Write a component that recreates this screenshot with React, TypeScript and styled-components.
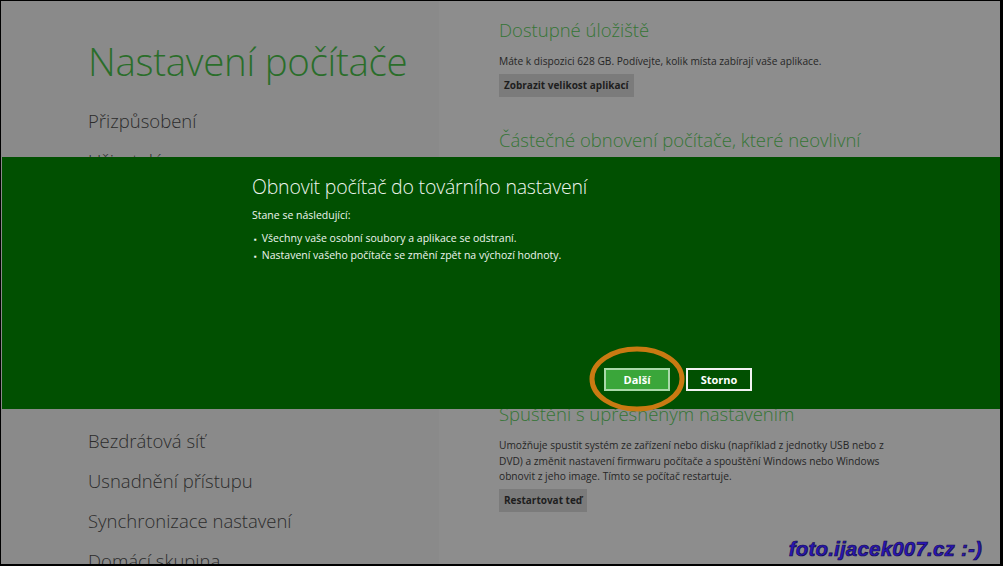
import React from 'react'
import styled, { createGlobalStyle } from 'styled-components'

const Global = createGlobalStyle`
  html, body {
    margin: 0;
    padding: 0;
    background: #000;
  }
  * { box-sizing: border-box; }
`

const Frame = styled.div`
  position: relative;
  width: 1003px;
  height: 566px;
  overflow: hidden;
  border-top: 1px solid #000;
  border-left: 1px solid #000;
  border-right: 3px solid #000;
  border-bottom: 2px solid #000;
  box-shadow: inset 1px 1px 0 #e8e8e8;
  background: #8b8b8b;
  font-family: "Open Sans", "Noto Sans", sans-serif;
`

const Page = styled.div`
  display: grid;
  grid-template-columns: 438px 1fr;
  height: 100%;
`

const Side = styled.div`
  padding: 34px 0 0 87px;
  background: #8a8a8a;
`

const Title = styled.h1`
  margin: 0 0 14px;
  font-size: 38.5px;
  font-weight: 300;
  line-height: 52px;
  color: #2a6e2a;
  letter-spacing: -0.3px;
`

const NavList = styled.ul`
  list-style: none;
  margin: 0;
  padding: 0;
`

const NavItem = styled.li`
  height: 40px;
  line-height: 40px;
  font-size: 18.5px;
  font-weight: 300;
  color: #2c2c2c;
  white-space: nowrap;
`

const Content = styled.div`
  padding: 14px 0 0 60px;
  background: #8d8d8d;
`

const Section = styled.section<{ gap?: number }>`
  margin-bottom: ${p => p.gap ?? 28}px;
`

const Heading = styled.h2`
  margin: 0 0 9px;
  font-size: 18.5px;
  font-weight: 300;
  line-height: 30px;
  color: #357535;
  white-space: nowrap;
`

const Text = styled.p`
  margin: 0 0 4px;
  font-size: 10.2px;
  line-height: 15.5px;
  color: #262626;
  white-space: nowrap;
`

const GreyButton = styled.button`
  display: block;
  height: 23px;
  padding: 0 5px;
  border: none;
  background: #7b7b7b;
  font-family: inherit;
  font-size: 10px;
  font-weight: 700;
  color: #1e1e1e;
`

const Band = styled.div`
  position: absolute;
  left: 1px;
  right: 0;
  top: 156px;
  height: 252px;
  background: #015001;
  padding: 16px 0 0 250px;
  color: #eef5ee;
`

const DialogTitle = styled.h3`
  margin: 0 0 6px;
  font-size: 19.5px;
  font-weight: 300;
  line-height: 28px;
  letter-spacing: -0.2px;
`

const DialogText = styled.p`
  margin: 0 0 7px;
  font-size: 10.5px;
  line-height: 16px;
`

const Bullets = styled.ul`
  list-style: none;
  margin: 0;
  padding: 0 0 0 2px;
`

const Bullet = styled.li`
  font-size: 10.5px;
  line-height: 16px;
  &::before {
    content: '▪';
    margin-right: 5px;
    font-size: 8px;
  }
`

const Actions = styled.div`
  position: absolute;
  left: 602px;
  top: 211px;
  display: flex;
  gap: 16px;
`

const DialogButton = styled.button<{ primary?: boolean }>`
  width: 66px;
  height: 23px;
  border: 2px solid ${p => (p.primary ? '#a9d9a9' : '#f2f2f2')};
  background: ${p => (p.primary ? '#3aa63a' : 'transparent')};
  color: #fff;
  font-family: inherit;
  font-size: 11px;
  font-weight: 700;
`

const Ring = styled.svg`
  position: absolute;
  left: 587px;
  top: 345px;
  width: 98px;
  height: 66px;
  overflow: visible;
`

const Watermark = styled.div`
  position: absolute;
  right: 18px;
  bottom: 3px;
  font-family: "Liberation Sans", "DejaVu Sans", sans-serif;
  font-style: italic;
  font-weight: 700;
  font-size: 20.5px;
  letter-spacing: 0.2px;
  color: #2a16b4;
  -webkit-text-stroke: 0.7px #120a50;
`

const nav = [
  'Přizpůsobení',
  'Uživatelé',
  'Oznámení',
  'Hledání',
  'Sdílení',
  'Obecné',
  'Ochrana osobních údajů',
  'Zařízení',
  'Bezdrátová síť',
  'Usnadnění přístupu',
  'Synchronizace nastavení',
  'Domácí skupina',
  'Windows Update'
]

const App = () => {
  return (
    <>
      <Global />
      <Frame>
        <Page>
          <Side>
            <Title>Nastavení počítače</Title>
            <NavList>
              {nav.map(n => (
                <NavItem key={n}>{n}</NavItem>
              ))}
            </NavList>
          </Side>
          <Content>
            <Section gap={28.5}>
              <Heading>Dostupné úložiště</Heading>
              <Text>Máte k dispozici 628 GB. Podívejte, kolik místa zabírají vaše aplikace.</Text>
              <GreyButton>Zobrazit velikost aplikací</GreyButton>
            </Section>
            <Section gap={24}>
              <Heading>Částečné obnovení počítače, které neovlivní<br />vaše soubory</Heading>
              <Text>
                Pokud počítač nefunguje správně, můžete jej obnovit bez ztráty fotek, hudby,<br />
                videí a dalších osobních souborů.
              </Text>
              <GreyButton>Začínáme</GreyButton>
            </Section>
            <Section gap={26}>
              <Heading>Odebrat vše a přeinstalovat Windows</Heading>
              <Text>
                Pokud chcete počítač recyklovat nebo začít úplně znovu, můžete ho obnovit<br />
                do továrního nastavení.
              </Text>
              <GreyButton>Začínáme</GreyButton>
            </Section>
            <Section>
              <Heading>Spuštění s upřesněným nastavením</Heading>
              <Text>
                Umožňuje spustit systém ze zařízení nebo disku (například z jednotky USB nebo z<br />
                DVD) a změnit nastavení firmwaru počítače a spouštění Windows nebo Windows<br />
                obnovit z jeho image. Tímto se počítač restartuje.
              </Text>
              <GreyButton>Restartovat teď</GreyButton>
            </Section>
          </Content>
        </Page>

        <Band>
          <DialogTitle>Obnovit počítač do továrního nastavení</DialogTitle>
          <DialogText>Stane se následující:</DialogText>
          <Bullets>
            <Bullet>Všechny vaše osobní soubory a aplikace se odstraní.</Bullet>
            <Bullet>Nastavení vašeho počítače se změní zpět na výchozí hodnoty.</Bullet>
          </Bullets>
          <Actions>
            <DialogButton primary>Další</DialogButton>
            <DialogButton>Storno</DialogButton>
          </Actions>
        </Band>

        <Ring viewBox="0 0 98 66">
          <ellipse cx="49" cy="33" rx="45" ry="30" fill="none" stroke="#c97a12" strokeWidth="5" />
        </Ring>

        <Watermark>foto.ijacek007.cz :-)</Watermark>
      </Frame>
    </>
  )
}

export default App
